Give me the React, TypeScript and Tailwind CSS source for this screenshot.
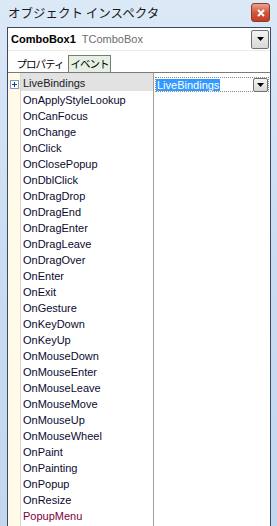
import React from 'react';

const events = [
  'LiveBindings',
  'OnApplyStyleLookup',
  'OnCanFocus',
  'OnChange',
  'OnClick',
  'OnClosePopup',
  'OnDblClick',
  'OnDragDrop',
  'OnDragEnd',
  'OnDragEnter',
  'OnDragLeave',
  'OnDragOver',
  'OnEnter',
  'OnExit',
  'OnGesture',
  'OnKeyDown',
  'OnKeyUp',
  'OnMouseDown',
  'OnMouseEnter',
  'OnMouseLeave',
  'OnMouseMove',
  'OnMouseUp',
  'OnMouseWheel',
  'OnPaint',
  'OnPainting',
  'OnPopup',
  'OnResize',
  'PopupMenu',
];

function DropArrow() {
  return (
    <svg width="7" height="4" viewBox="0 0 7 4">
      <path d="M0 0h7L3.5 4z" fill="#000" />
    </svg>
  );
}

export default function App() {
  return (
    <div className="flex h-[526px] w-[277px] flex-col overflow-hidden bg-gradient-to-b from-[#dce9f7] via-[#c9dcf2] to-[#c3d7ef] font-['Liberation_Sans',sans-serif]">
      {/* title bar */}
      <div className="flex h-[27px] shrink-0 items-center justify-between pl-[8px] pr-[7px]">
        <span className="font-['Noto_Sans_CJK_JP',sans-serif] text-[12.5px] leading-none text-[#1a1a1a]">
          オブジェクト インスペクタ
        </span>
        <div className="mb-[2px] flex h-[19px] w-[19px] items-center justify-center rounded-[3px] border border-[#8a3b2b] bg-gradient-to-b from-[#e8a290] via-[#d2573c] to-[#c0401f]">
          <svg width="8" height="8" viewBox="0 0 8 8">
            <path d="M1 1l6 6M7 1L1 7" stroke="#fff" strokeWidth="2" />
          </svg>
        </div>
      </div>

      <div className="ml-[7px] mr-[6px] flex flex-1 flex-col border-x border-t border-[#3a4a60] bg-white">
        {/* combo box */}
        <div className="flex h-[23px] shrink-0 items-center justify-between border-b border-[#e4eee2] pl-[3px] pr-[1px]">
          <div className="flex items-baseline gap-[6px] text-[11px]">
            <span className="font-bold text-black">ComboBox1</span>
            <span className="text-[#6d6d6d]">TComboBox</span>
          </div>
          <div className="flex h-[19px] w-[18px] items-center justify-center rounded-[2px] border border-[#707070] bg-gradient-to-b from-[#f4f4f4] to-[#d8d8d8]">
            <DropArrow />
          </div>
        </div>

        {/* tabs */}
        <div className="flex h-[22px] shrink-0 items-end border-b border-[#7a7a7a] font-['Noto_Sans_CJK_JP',sans-serif] text-[10.5px] tracking-[-1px] text-black">
          <div className="flex h-[16px] w-[60px] items-center justify-center pl-[4px]">プロパティ</div>
          <div className="flex h-[17px] w-[43px] items-center justify-center border-x border-t border-[#7a7a7a] bg-[#e6f0e2]">
            イベント
          </div>
        </div>

        {/* grid */}
        <div className="flex flex-1 text-[11px]">
          <div className="w-[13px] shrink-0 border-r border-[#d8d8d0] bg-[#fffbe8]">
            <div className="flex h-[19px] items-center justify-center pt-[3px]">
              <div className="flex h-[9px] w-[9px] items-center justify-center border border-[#7f9db9] bg-white">
                <svg width="5" height="5" viewBox="0 0 5 5">
                  <path d="M0 2.5h5M2.5 0v5" stroke="#1c3b8c" strokeWidth="1" />
                </svg>
              </div>
            </div>
          </div>
          <div className="w-[133px] shrink-0 border-r border-[#a0a0a0]">
            <div className="h-[19px]">
              <div className="flex h-[18px] items-center bg-[#e2e2e2] pl-[2px] pt-[3px] text-[#1a1a1a]">
                {events[0]}
              </div>
            </div>
            {events.slice(1).map((name) => (
              <div
                key={name}
                className={
                  'flex h-[16px] items-center pl-[2px] ' +
                  (name === 'PopupMenu' ? 'text-[#80003a]' : 'text-[#0a0a30]')
                }
              >
                {name}
              </div>
            ))}
          </div>
          <div className="flex-1 pl-[1px] pr-[1px]">
            <div className="mt-[4px] flex h-[15px] items-center justify-between border border-dotted border-[#8a8a8a]">
              <span className="bg-[#3399ff] px-[1px] leading-[12px] text-white">LiveBindings</span>
              <div className="flex h-[14px] w-[15px] items-center justify-center rounded-[2px] border border-[#707070] bg-gradient-to-b from-[#f4f4f4] to-[#d8d8d8]">
                <DropArrow />
              </div>
            </div>
          </div>
        </div>
      </div>
    </div>
  );
}
